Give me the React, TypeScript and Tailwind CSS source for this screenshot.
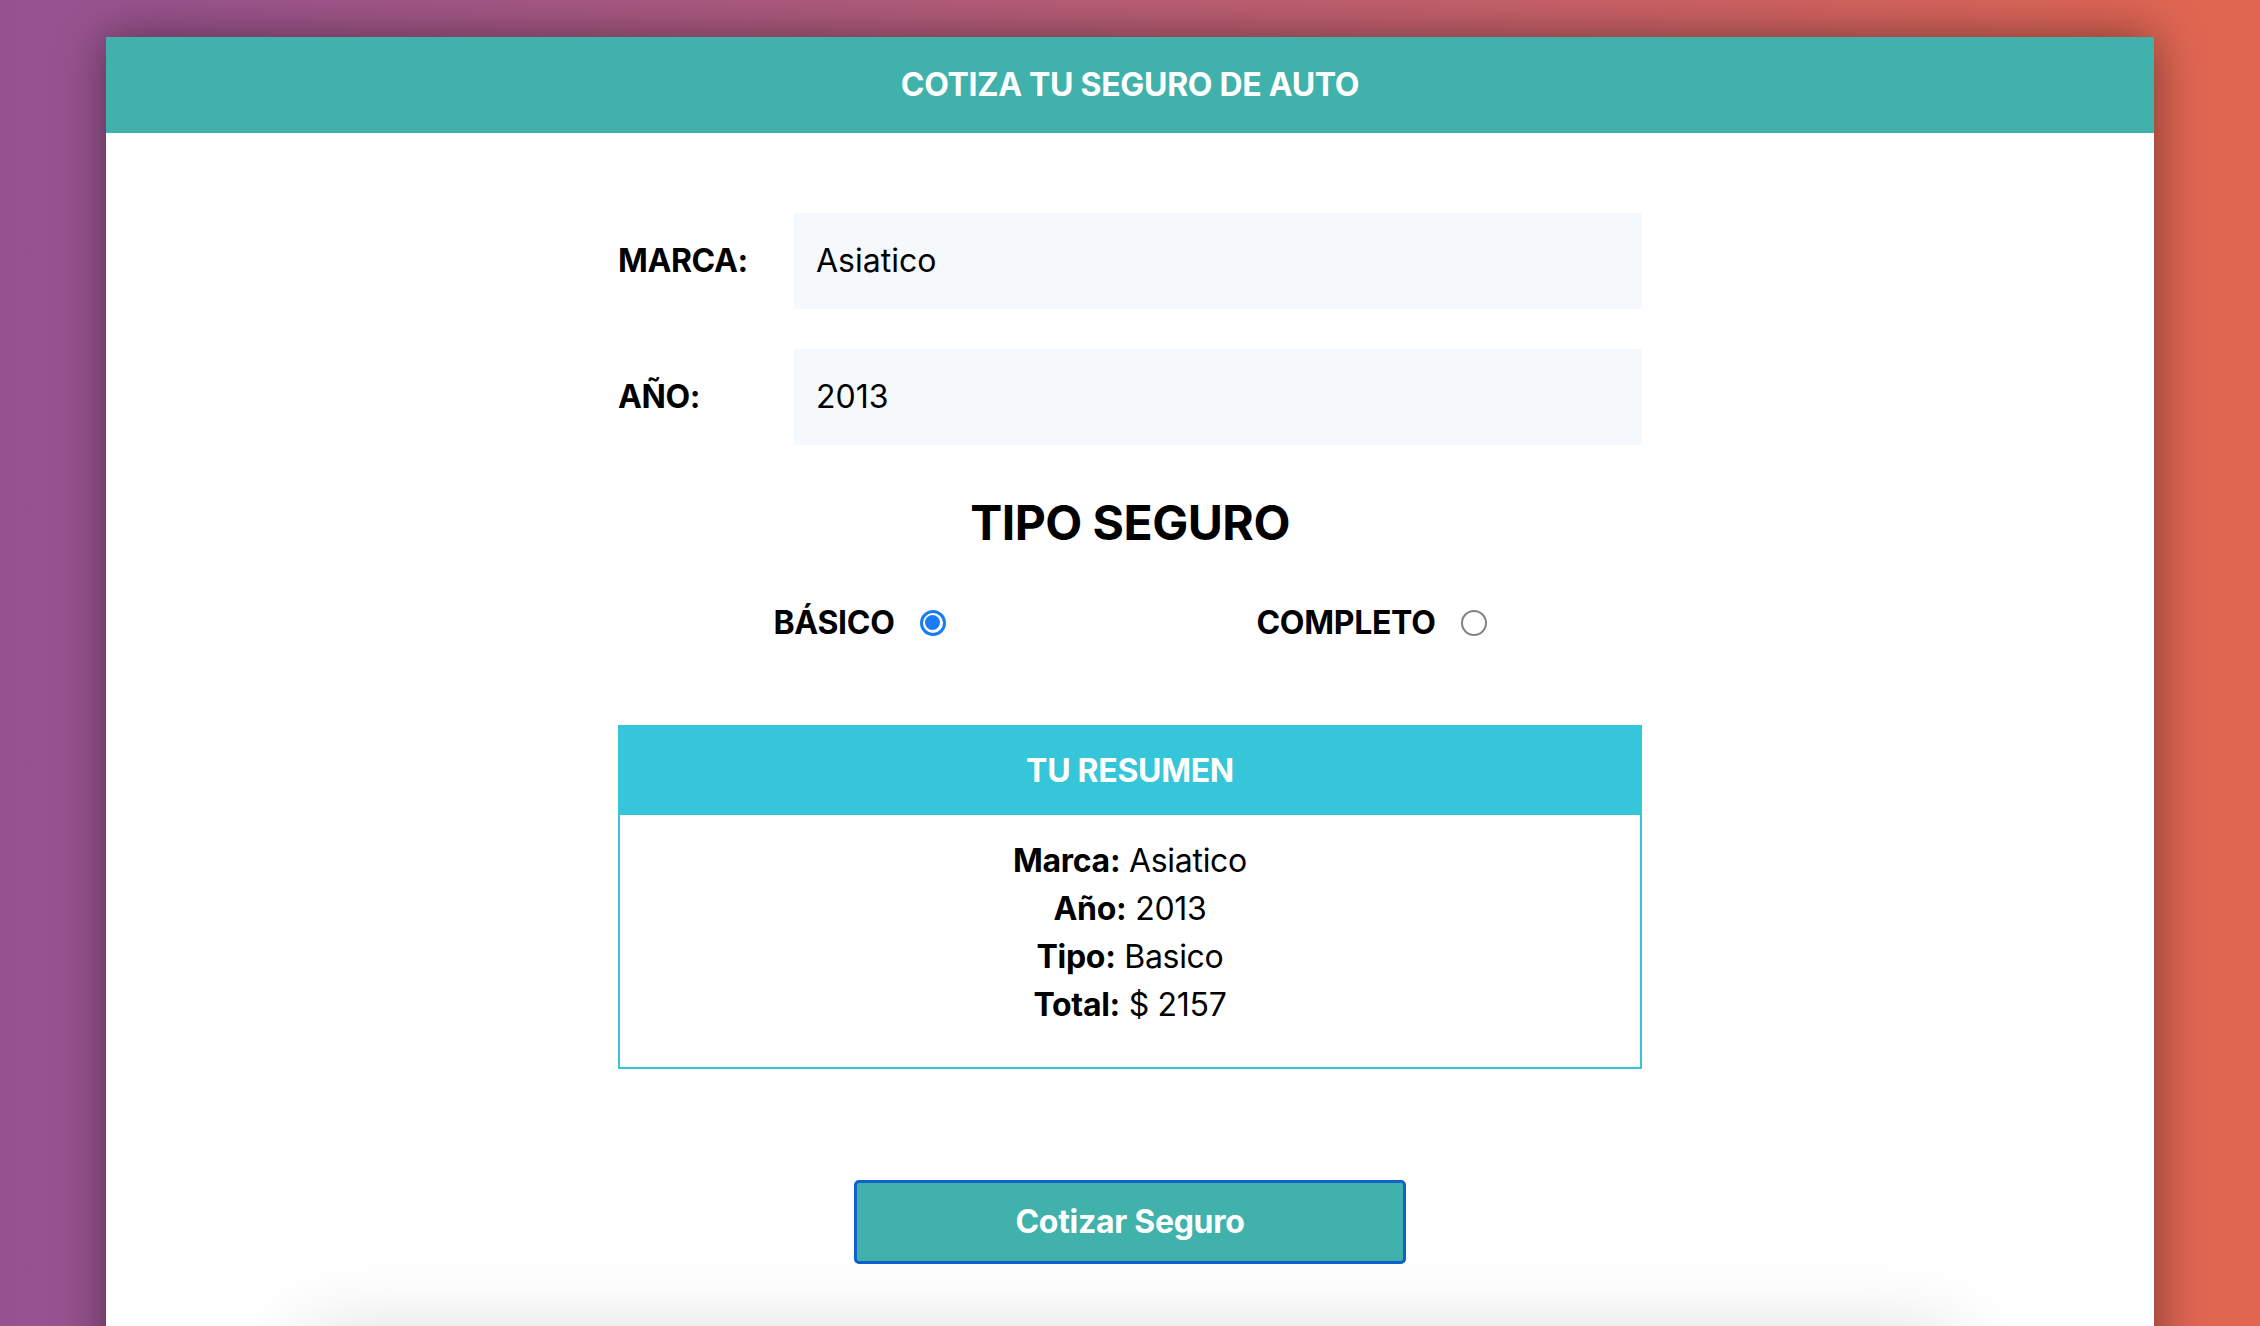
import { useState } from "react";

const FONT = { fontFamily: "Inter, 'Noto Sans', sans-serif" };

type RadioProps = {
  label: string;
  checked: boolean;
  onSelect: () => void;
};

const Radio = ({ label, checked, onSelect }: RadioProps) => {
  return (
    <label
      onClick={onSelect}
      className="flex items-center justify-center pr-[29px] cursor-pointer"
    >
      <span className="text-[32px] leading-[48px] font-bold text-black tracking-[-0.3px]">{label}</span>
      {checked ? (
        <span className="ml-[25px] w-[26px] h-[26px] rounded-full border-[3px] border-[#1a7cf4] bg-white flex items-center justify-center">
          <span className="w-[15px] h-[15px] rounded-full bg-[#1a7cf4]" />
        </span>
      ) : (
        <span className="ml-[25px] w-[26px] h-[26px] rounded-full border-2 border-[#828282] bg-white" />
      )}
    </label>
  );
};

export default function App() {
  const [tipo, setTipo] = useState<"basico" | "completo">("basico");

  return (
    <div
      style={FONT}
      className="min-h-screen bg-linear-to-r from-[#955291] to-[#e2664f] pt-[37px] overflow-hidden"
    >
      <div className="w-[2048px] mx-auto bg-white shadow-[0_0_45px_rgba(0,0,0,0.45)]">
        <header className="h-[96px] bg-[#41b2ab] flex items-center justify-center">
          <h1 className="text-[32px] font-bold text-white uppercase tracking-[-0.3px]">Cotiza tu seguro de auto</h1>
        </header>

        <form className="w-[1024px] mx-auto pt-[80px] flex flex-col">
          <div className="flex items-center h-[96px]">
            <span className="w-[176px] text-[32px] font-bold text-black tracking-[-0.4px]">MARCA:</span>
            <div className="flex-1 h-full bg-[#f5f9fc] flex items-center px-[22px] text-[32px] text-black">
              Asiatico
            </div>
          </div>
          <div className="flex items-center h-[96px] mt-[40px]">
            <span className="w-[176px] text-[32px] font-bold text-black tracking-[-0.4px]">AÑO:</span>
            <div className="flex-1 h-full bg-[#f5f9fc] flex items-center px-[22px] text-[32px] text-black">
              2013
            </div>
          </div>

          <h2 className="mt-[49px] text-center text-[48px] leading-[1.2] font-bold text-black tracking-[-0.5px]">
            TIPO SEGURO
          </h2>

          <div className="grid grid-cols-2 mt-[47px]">
            <Radio label="BÁSICO" checked={tipo === "basico"} onSelect={() => setTipo("basico")} />
            <Radio label="COMPLETO" checked={tipo === "completo"} onSelect={() => setTipo("completo")} />
          </div>

          <div className="mt-[78px] border-2 border-[#35c6d9]">
            <div className="h-[88px] bg-[#35c6d9] flex items-center justify-center">
              <span className="text-[32px] font-bold text-white tracking-[-0.3px]">TU RESUMEN</span>
            </div>
            <div className="pt-[22px] pb-[38px] text-center text-[32px] leading-[48px] text-black tracking-[-0.3px]">
              <p><span className="font-bold">Marca:</span> Asiatico</p>
              <p><span className="font-bold">Año:</span> 2013</p>
              <p><span className="font-bold">Tipo:</span> {tipo === "basico" ? "Basico" : "Completo"}</p>
              <p><span className="font-bold">Total:</span> $ 2157</p>
            </div>
          </div>

          <div className="flex justify-center mt-[111px]">
            <button
              type="button"
              className="w-[552px] h-[84px] bg-[#41b2ab] border-[3px] border-[#0f62cc] rounded-[5px] text-[32px] font-bold text-white tracking-[-0.3px]"
            >
              Cotizar Seguro
            </button>
          </div>
        </form>

        <div className="pt-[77px] pb-[120px] flex justify-center">
          <div className="w-[1650px] h-[300px] bg-white shadow-[0_0_80px_rgba(0,0,0,0.18)]" />
        </div>
      </div>
    </div>
  );
}
